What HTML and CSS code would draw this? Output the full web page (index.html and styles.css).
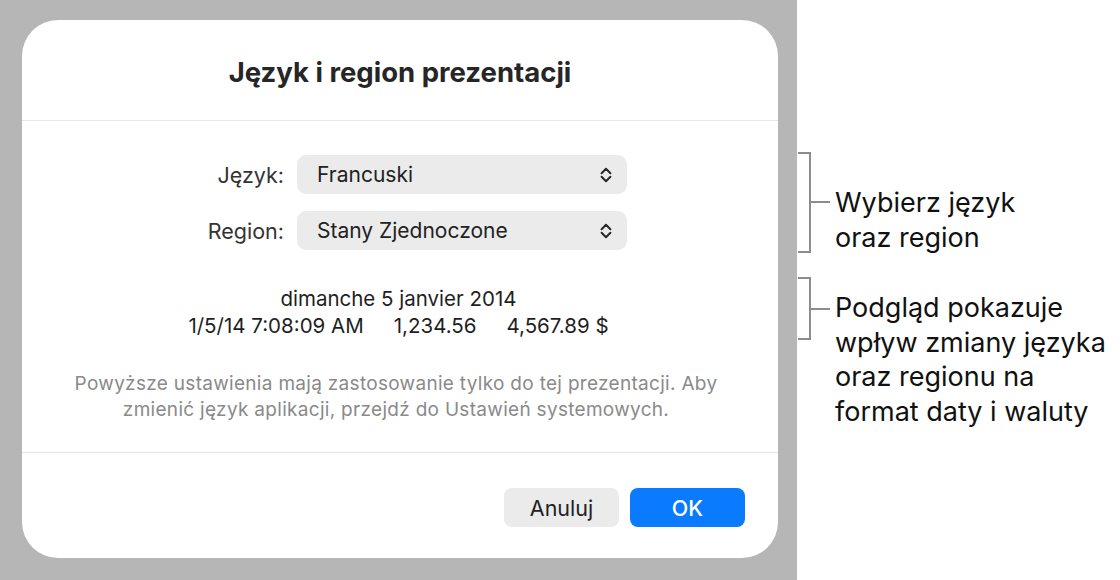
FILE: index.html
```html
<!DOCTYPE html>
<html lang="pl">
<head>
<meta charset="utf-8">
<title>Język i region prezentacji</title>
<link rel="stylesheet" href="styles.css">
</head>
<body>
<div class="stage">
  <div class="dialog">
    <div class="header">
      <h1 class="title">Język i region prezentacji</h1>
    </div>
    <div class="content">
      <div class="form">
        <label class="label">Język:</label>
        <div class="popup">
          <span class="popup-value">Francuski</span>
          <svg class="chev" width="12" height="16" viewBox="0 0 12 16"><path d="M1.6 6.2 L6 1.8 L10.4 6.2 M1.6 9.8 L6 14.2 L10.4 9.8" fill="none" stroke="#2a2a2a" stroke-width="2" stroke-linecap="round" stroke-linejoin="round"/></svg>
        </div>
        <label class="label">Region:</label>
        <div class="popup">
          <span class="popup-value">Stany Zjednoczone</span>
          <svg class="chev" width="12" height="16" viewBox="0 0 12 16"><path d="M1.6 6.2 L6 1.8 L10.4 6.2 M1.6 9.8 L6 14.2 L10.4 9.8" fill="none" stroke="#2a2a2a" stroke-width="2" stroke-linecap="round" stroke-linejoin="round"/></svg>
        </div>
      </div>
      <div class="preview">
        <div class="preview-line">dimanche 5 janvier 2014</div>
        <div class="preview-line"><span>1/5/14 7:08:09 AM</span><span class="gap">1,234.56</span><span class="gap">4,567.89 $</span></div>
      </div>
      <p class="note">Powyższe ustawienia mają zastosowanie tylko do tej prezentacji. Aby<br>zmienić język aplikacji, przejdź do Ustawień systemowych.</p>
    </div>
    <div class="footer">
      <button class="btn btn-cancel">Anuluj</button>
      <button class="btn btn-ok">OK</button>
    </div>
  </div>
</div>
<div class="annotations">
  <div class="annot annot-1">
    <div class="brace brace-1"></div>
    <div class="tick tick-1"></div>
    <div class="annot-text text-1">Wybierz język<br>oraz region</div>
  </div>
  <div class="annot annot-2">
    <div class="brace brace-2"></div>
    <div class="tick tick-2"></div>
    <div class="annot-text text-2">Podgląd pokazuje<br>wpływ zmiany języka<br>oraz regionu na<br>format daty i waluty</div>
  </div>
</div>
</body>
</html>
```

FILE: styles.css
```css
* { box-sizing: border-box; }
html, body { margin: 0; padding: 0; }
body {
  width: 1120px;
  height: 580px;
  display: flex;
  background: #ffffff;
  font-family: Inter, "Noto Sans", "DejaVu Sans", sans-serif;
  color: #1d1d1f;
  overflow: hidden;
}
.stage {
  width: 797px;
  height: 580px;
  background: #b6b6b6;
  padding: 20px 19px 22px 22px;
  flex: none;
}
.dialog {
  width: 756px;
  height: 538px;
  background: #ffffff;
  border-radius: 36px;
  display: flex;
  flex-direction: column;
  overflow: hidden;
}
.header {
  height: 101px;
  border-bottom: 1.5px solid #e6e6e6;
  display: flex;
  align-items: center;
  justify-content: center;
  padding-top: 4px;
  flex: none;
}
.title {
  margin: 0;
  font-size: 27.5px;
  font-weight: 700;
  color: #262626;
}
.content {
  height: 332px;
  flex: none;
  border-bottom: 1.5px solid #e6e6e6;
  display: flex;
  flex-direction: column;
  padding-top: 34px;
}
.form {
  display: grid;
  grid-template-columns: 262px 330px;
  column-gap: 13px;
  row-gap: 17px;
  align-items: center;
}
.label {
  text-align: right;
  font-size: 21.5px;
  color: #333333;
}
.popup {
  height: 39px;
  background: #ebebeb;
  border-radius: 9px;
  display: flex;
  align-items: center;
  justify-content: space-between;
  padding: 0 15px 0 20px;
}
.popup-value {
  font-size: 21px;
  color: #222222;
}
.chev { display: block; }
.preview {
  margin-top: 35px;
  text-align: center;
  font-size: 20.5px;
  line-height: 27px;
  color: #1f1f1f;
  padding-right: 3px;
}
.gap { margin-left: 30px; }
.note {
  margin: 32px 0 0 0;
  text-align: center;
  font-size: 19px;
  letter-spacing: 0.3px;
  line-height: 26px;
  color: #8a8a8a;
  padding-right: 8px;
}
.footer {
  flex: 1;
  display: flex;
  justify-content: flex-end;
  align-items: flex-start;
  padding: 35px 33px 0 0;
  gap: 11px;
}
.btn {
  height: 39px;
  width: 115px;
  border: none;
  border-radius: 8px;
  font-family: inherit;
  font-size: 21.5px;
}
.btn-cancel {
  background: #ebebeb;
  color: #222222;
}
.btn-ok {
  background: #0a7aff;
  color: #ffffff;
  font-weight: 500;
}
.annotations {
  flex: 1;
  padding: 152px 0 0 1px;
  display: flex;
  flex-direction: column;
}
.annot {
  display: flex;
  align-items: flex-start;
}
.annot-2 { margin-top: 22px; }
.brace {
  width: 13px;
  border: 2px solid #8c8c8c;
  border-left: none;
  flex: none;
}
.brace-1 { height: 101px; }
.brace-2 { height: 63px; }
.tick {
  width: 19px;
  height: 2px;
  background: #8c8c8c;
  flex: none;
}
.tick-1 { margin-top: 49px; }
.tick-2 { margin-top: 31px; }
.annot-text {
  margin-left: 5px;
  font-size: 27px;
  color: #111111;
  white-space: nowrap;
}
.text-1 { line-height: 35px; margin-top: 33px; }
.text-2 { line-height: 34.6px; margin-top: 14px; }
```
